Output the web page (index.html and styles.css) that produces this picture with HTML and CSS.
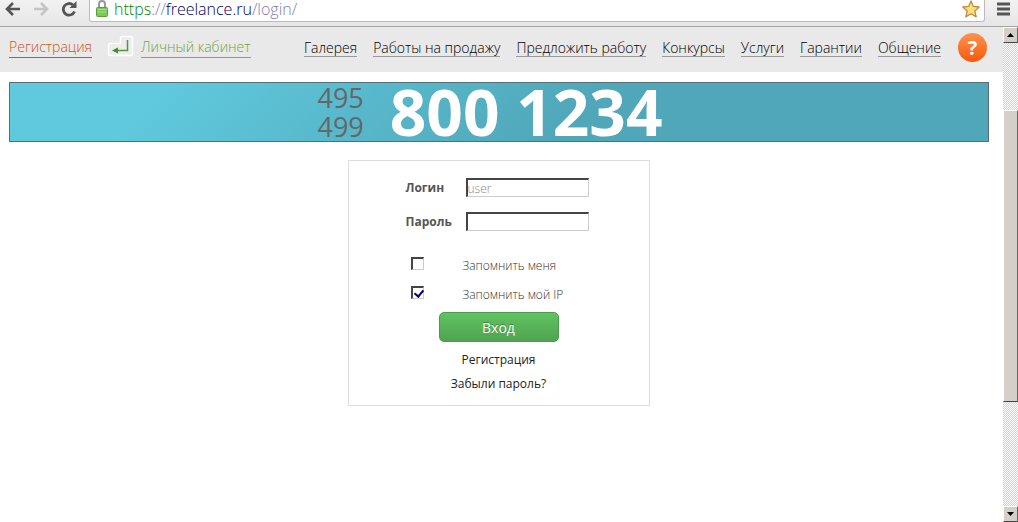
FILE: index.html
```
<!DOCTYPE html>
<html lang="ru">
<head>
    <meta charset="utf-8">
    <meta name="viewport" content="width=device-width, initial-scale=1">
    <title>Freelance.ru</title>
    <link rel="stylesheet" href="styles.css">
</head>
<body>
    <div class="toolbar">
        <button class="tool" type="button" aria-label="Назад">
            <svg width="16" height="14" viewBox="0 0 16 14"><path d="M8 1L2 7l6 6M2 7h13" fill="none" stroke="#555" stroke-width="2.6"/></svg>
        </button>
        <button class="tool" type="button" aria-label="Вперёд">
            <svg width="16" height="14" viewBox="0 0 16 14"><path d="M8 1l6 6-6 6M14 7H1" fill="none" stroke="#c4c4c4" stroke-width="2.6"/></svg>
        </button>
        <button class="tool" type="button" aria-label="Обновить">
            <svg width="16" height="16" viewBox="0 0 16 16"><path d="M13.500 10.500A5.800 5.800 0 1 1 12 4" fill="none" stroke="#555" stroke-width="2.8"/><path d="M15.500 0v7H8.500z" fill="#555"/></svg>
        </button>
        <div class="address">
            <svg width="12" height="18" viewBox="0 0 12 18">
                <path d="M3 9V4a3 3 0 0 1 6 0v5" fill="none" stroke="#999" stroke-width="2"/>
                <rect x=".5" y="7.500" width="11" height="9" rx="1" fill="#7cc95a" stroke="#5a9e3e"/>
                <path d="M1.500 9.500h9M1.500 12h9" stroke="#a4df86"/>
            </svg>
            <span class="url"><span class="url-scheme">https</span>://<span class="url-host">freelance.ru</span>/login/</span>
            <svg class="star" width="18" height="18" viewBox="0 0 18 18"><path d="M9 1l2.400 5.400 5.800.6-4.400 3.900 1.400 6L9 13.800 3.800 16.900l1.400-6L.8 7l5.800-.6z" fill="#fbe078" stroke="#c08a45" stroke-width="1.300" stroke-linejoin="round"/></svg>
        </div>
        <button class="tool" type="button" aria-label="Меню">
            <svg width="13" height="14" viewBox="0 0 13 14"><path d="M0 2h13M0 7h13M0 12h13" stroke="#555" stroke-width="3"/></svg>
        </button>
    </div>
    <div class="window">
        <div class="page">
            <header class="header">
                <a class="register" href="#">Регистрация</a>
                <svg class="enter" width="27" height="22" viewBox="0 0 27 22">
                    <path d="M3.500 8.500h10v-5q0-2 2-2h8q2 0 2 2v15q0 2-2 2h-20q-2 0-2-2v-8q0-2 2-2z" fill="#ededed" stroke="#fff" stroke-width="1.500"/>
                    <path d="M20.500 5v10.500H9" fill="none" stroke="#55963c" stroke-width="1.500"/>
                    <path d="M5 15.500l6-3v6z" fill="#3f8b30"/>
                </svg>
                <a class="cabinet" href="#">Личный кабинет</a>
                <nav class="nav">
                    <a href="#">Галерея</a>
                    <a href="#">Работы на продажу</a>
                    <a href="#">Предложить работу</a>
                    <a href="#">Конкурсы</a>
                    <a href="#">Услуги</a>
                    <a href="#">Гарантии</a>
                    <a href="#">Общение</a>
                </nav>
                <a class="help" href="#" aria-label="Помощь">?</a>
            </header>
            <div class="banner">
                <div class="codes">
                    <span>495</span>
                    <span>499</span>
                </div>
                <strong class="phone">800 1234</strong>
            </div>
            <form class="login">
                <div class="field">
                    <label for="login">Логин</label>
                    <input id="login" type="text" placeholder="user">
                </div>
                <div class="field">
                    <label for="password">Пароль</label>
                    <input id="password" type="password">
                </div>
                <div class="options">
                    <div class="option">
                        <input id="remember" type="checkbox">
                        <label for="remember">Запомнить меня</label>
                    </div>
                    <div class="option">
                        <input id="remember-ip" type="checkbox" checked>
                        <label for="remember-ip">Запомнить мой IP</label>
                    </div>
                </div>
                <button class="submit" type="submit">Вход</button>
                <a class="link" href="#">Регистрация</a>
                <a class="link" href="#">Забыли пароль?</a>
            </form>
        </div>
        <div class="scrollbar">
            <button class="arrow" type="button" aria-label="Вверх">
                <svg width="7" height="4" viewBox="0 0 7 4"><path d="M0 4h7L3.500 0z"/></svg>
            </button>
            <div class="track">
                <div class="thumb"></div>
            </div>
            <button class="arrow" type="button" aria-label="Вниз">
                <svg width="7" height="4" viewBox="0 0 7 4"><path d="M0 0h7L3.500 4z"/></svg>
            </button>
        </div>
    </div>
</body>
</html>
```
FILE: styles.css
```
* {
    box-sizing: border-box;
}
body {
    display: flex;
    flex-direction: column;
    height: 100vh;
    margin: 0;
    background: #fff;
    font-family: "Open Sans", "Noto Sans", sans-serif;
    font-size: 12px;
}
a {
    text-decoration: none;
}
button {
    padding: 0;
    cursor: pointer;
}
svg {
    display: block;
    flex: none;
}

/* browser toolbar */
.toolbar {
    display: flex;
    flex: none;
    align-items: flex-start;
    gap: 12px;
    height: 27px;
    padding: 0 8px 0 5px;
    background: linear-gradient(#f2f2f2, #e6e6e6);
    border-bottom: 1px solid #a5a5a5;
}
.tool {
    display: flex;
    align-items: center;
    height: 17px;
    border: 0;
    background: none;
}
.address {
    display: flex;
    flex: 1;
    align-items: center;
    height: 22px;
    padding: 0 4px 3px 6px;
    background: #fff;
    border: 1px solid #bbb;
    border-top: 0;
    border-radius: 0 0 3px 3px;
}
.url {
    flex: 1;
    margin-left: 6px;
    color: #8080ad;
    font-size: 16px;
    font-weight: 300;
    line-height: 18px;
}
.url-scheme {
    color: #008a00;
}
.url-host {
    color: #000060;
}

.window {
    display: flex;
    flex: 1;
    min-height: 0;
}
.page {
    flex: 1;
    min-width: 0;
    overflow: hidden;
}

/* site header */
.header {
    display: flex;
    align-items: flex-start;
    height: 45px;
    padding: 6px 16px 0 9px;
    background: #e9e9e9;
    white-space: nowrap;
}
.register,
.cabinet {
    height: 25px;
    border-bottom: 1px solid;
    font-size: 14px;
    font-weight: 300;
    line-height: 28px;
}
.register {
    border-color: #d0511b;
    color: #d0511b;
}
.enter {
    margin: 2px 7px 0 15px;
}
.cabinet {
    border-color: #79b04a;
    color: #6da53c;
}
.nav {
    display: flex;
    gap: 16px;
    margin-left: auto;
    padding-top: 4px;
}
.nav a {
    height: 20px;
    border-bottom: 1px solid #999;
    color: #000;
    font-size: 14px;
    font-weight: 300;
    line-height: 22px;
}
.help {
    width: 29px;
    height: 29px;
    margin-left: 17px;
    border-radius: 50%;
    background: linear-gradient(#ff9251, #f65a08);
    color: #fff;
    font-size: 20px;
    font-weight: 700;
    line-height: 29px;
    text-align: center;
}

.banner {
    display: flex;
    align-items: center;
    justify-content: center;
    gap: 26px;
    height: 60px;
    margin: 10px 14px 0 9px;
    padding-right: 18px;
    border: 1px solid #566f74;
    background: linear-gradient(135deg, #60c9dd 15%, #50a7b9 58%);
}
.codes {
    display: flex;
    flex-direction: column;
    color: #666;
    font-size: 27px;
    line-height: 29px;
}
.phone {
    color: #fff;
    font-size: 64px;
    font-weight: 700;
    line-height: 58px;
}

/* login form */
.login {
    display: flex;
    flex-direction: column;
    align-items: center;
    width: 302px;
    margin: 18px 0 0 calc(50% - 154px);
    padding: 17px 0 9px;
    border: 1px solid #ddd;
    color: #555;
}
.field {
    display: flex;
    align-items: center;
    width: 186px;
    height: 19px;
    margin-bottom: 15px;
}
.field label {
    width: 60px;
    font-weight: 700;
}
.field input {
    width: 123px;
    height: 19px;
    padding: 0;
    border: 1px solid #ccc;
    border-top: 2px solid #444;
    border-left: 2px solid #444;
    font: 300 12px "Open Sans", sans-serif;
}
.field input::placeholder {
    color: #888;
}
.options {
    width: 176px;
    margin-top: 11px;
}
.option {
    display: flex;
    align-items: flex-start;
    height: 29px;
}
.option input {
    width: 13px;
    height: 13px;
    margin: 0 39px 0 0;
    appearance: none;
    border: 1px solid #ccc;
    border-top: 2px solid #444;
    border-left: 2px solid #444;
    background: #fff;
}
.option input:checked::before {
    content: "";
    display: block;
    width: 4px;
    height: 7px;
    margin-left: 3px;
    border: solid #000070;
    border-width: 0 2px 2px 0;
    transform: rotate(40deg);
}
.option label {
    color: #333;
    font-weight: 300;
    line-height: 18px;
}
.submit {
    width: 120px;
    height: 30px;
    margin: -3px 0 6px;
    border: 1px solid #4a9d4c;
    border-radius: 5px;
    background: linear-gradient(#61c362, #4fa351);
    color: #fff;
    font: 14px "Open Sans", sans-serif;
    text-shadow: 0 -1px 0 #3e8740;
}
.link {
    color: #222;
    line-height: 24px;
}

/* scrollbar */
.scrollbar {
    display: flex;
    flex-direction: column;
    width: 15px;
}
.arrow,
.thumb {
    border: 1px solid;
    border-color: #fff #666 #444 #fff;
    background: #d4d0c8;
}
.arrow {
    display: flex;
    align-items: center;
    justify-content: center;
    height: 16px;
}
.track {
    flex: 1;
    background: repeating-conic-gradient(#d4d0c8 0 25%, #fff 0 50%) 0 0 / 2px 2px;
}
.thumb {
    height: 63%;
    margin-top: 67px;
}
```
